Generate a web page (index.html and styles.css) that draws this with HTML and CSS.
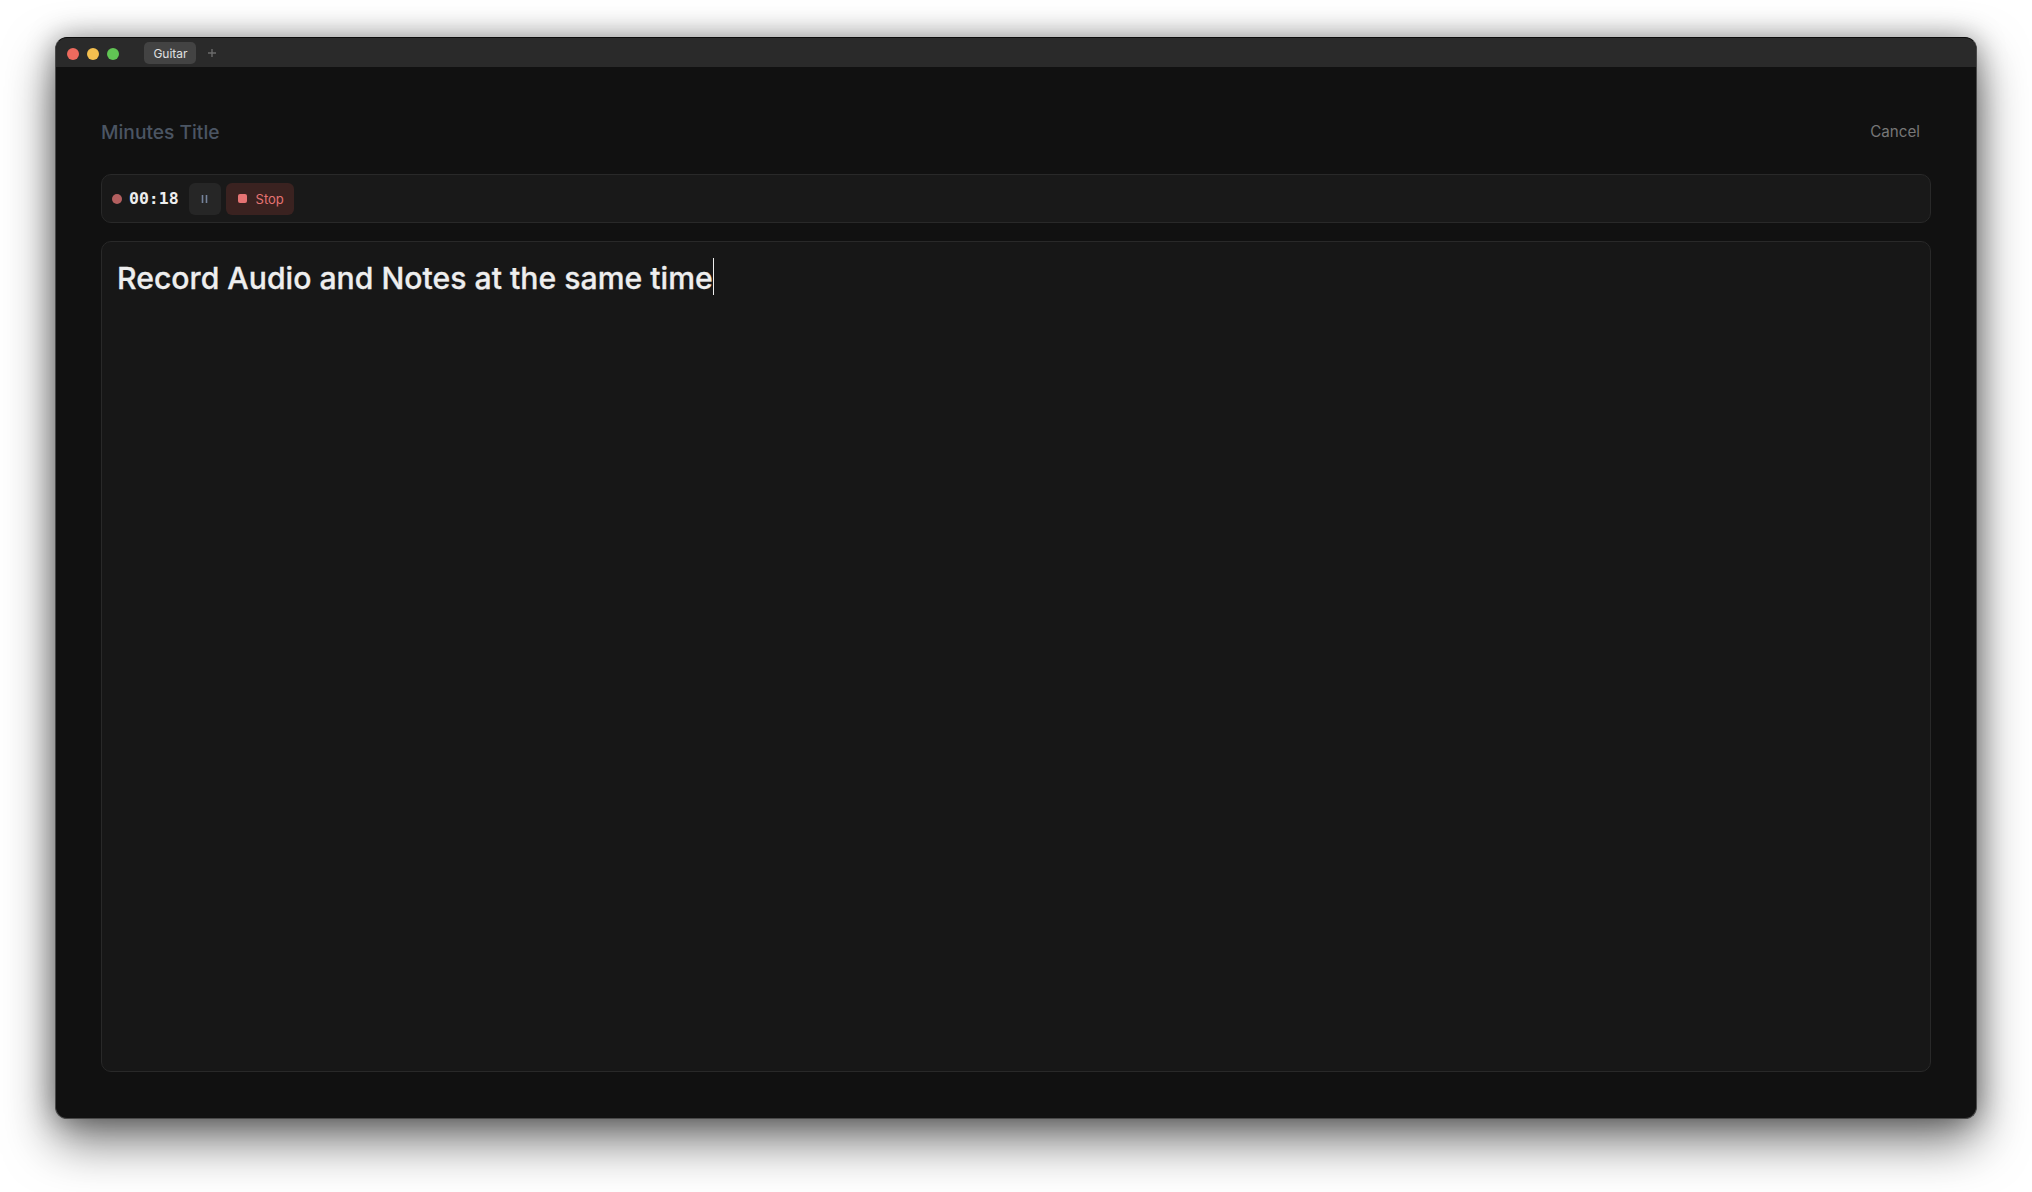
FILE: index.html
```html
<!DOCTYPE html>
<html lang="en">
<head>
    <meta charset="UTF-8">
    <title>Minutes</title>
    <link rel="stylesheet" href="styles.css">
</head>
<body>
<div class="window">
    <div class="titlebar">
        <div class="traffic">
            <span class="light light-red"></span>
            <span class="light light-yellow"></span>
            <span class="light light-green"></span>
        </div>
        <div class="tab">Guitar</div>
        <svg class="tab-add" width="10" height="10" viewBox="0 0 10 10"><path d="M5 1v8M1 5h8" stroke="#6b6b6b" stroke-width="1.4"/></svg>
    </div>
    <div class="content">
        <div class="header">
            <div class="title">Minutes Title</div>
            <div class="cancel">Cancel</div>
        </div>
        <div class="recorder">
            <span class="rec-dot"></span>
            <span class="timer">00:18</span>
            <div class="btn btn-pause">
                <svg width="8" height="10" viewBox="0 0 8 10"><path d="M1.5 1v8M5.5 1v8" stroke="#75839b" stroke-width="1.6"/></svg>
            </div>
            <div class="btn btn-stop">
                <span class="stop-icon"></span>
                <span>Stop</span>
            </div>
        </div>
        <div class="editor">
            <h1 class="editor-text">Record Audio and Notes at the same time</h1><span class="caret"></span>
        </div>
    </div>
</div>
</body>
</html>
```

FILE: styles.css
```css
html, body {
    height: 100%;
}

body {
    margin: 0;
    padding: 37px 55px 0;
    box-sizing: border-box;
    background: #fff;
    font-family: Inter, "Liberation Sans", sans-serif;
    overflow: hidden;
}

.window {
    height: 1082px;
    box-sizing: border-box;
    display: flex;
    flex-direction: column;
    background: #111;
    border: 1px solid #4a4a4a;
    border-top-color: #0c0c0c;
    border-radius: 12px;
    box-shadow: 0 22px 50px rgba(0, 0, 0, 0.55), 0 0 28px rgba(0, 0, 0, 0.35);
    overflow: hidden;
}

.titlebar {
    height: 29px;
    flex-shrink: 0;
    display: flex;
    align-items: center;
    background: #2a2a2a;
    padding-left: 11px;
}

.traffic {
    display: flex;
    gap: 8px;
    padding-top: 3px;
}

.light {
    width: 12px;
    height: 12px;
    border-radius: 50%;
}

.light-red { background: #ed6a5e; }
.light-yellow { background: #f4bf4f; }
.light-green { background: #61c554; }

.tab {
    margin-left: 25px;
    height: 22px;
    width: 52px;
    margin-top: 1px;
    padding-left: 1px;
    box-sizing: border-box;
    display: flex;
    align-items: center;
    justify-content: center;
    background: #434343;
    border-radius: 5px;
    color: #e0e0e0;
    font-size: 12px;
}

.tab-add {
    margin-left: 11px;
    margin-top: 1px;
}

.content {
    flex: 1;
    display: flex;
    flex-direction: column;
    padding: 46px 45px;
    min-height: 0;
}

.header {
    display: flex;
    justify-content: space-between;
    align-items: center;
    height: 38px;
    margin-bottom: 23px;
}

.title {
    font-size: 19.2px;
    font-weight: 500;
    color: #4b5563;
}

.cancel {
    font-size: 15.2px;
    color: #777;
    margin-right: 11px;
    padding-bottom: 1px;
}

.recorder {
    height: 49px;
    box-sizing: border-box;
    flex-shrink: 0;
    display: flex;
    align-items: center;
    padding-left: 10px;
    background: #191919;
    border: 1px solid #292929;
    border-radius: 10px;
    margin-bottom: 18px;
}

.rec-dot {
    width: 10px;
    height: 10px;
    border-radius: 50%;
    background: #b35f5f;
}

.timer {
    margin-left: 7px;
    font-family: "DejaVu Sans Mono", "Liberation Mono", monospace;
    font-size: 16.5px;
    font-weight: 700;
    color: #eee;
}

.btn {
    height: 32px;
    display: flex;
    align-items: center;
    justify-content: center;
    border-radius: 6px;
}

.btn-pause {
    width: 32px;
    margin-left: 10px;
    background: #262626;
}

.btn-stop {
    width: 68px;
    box-sizing: border-box;
    padding-left: 2px;
    margin-left: 5px;
    gap: 9px;
    background: #3a2220;
    color: #e57373;
    font-size: 13px;
}

.stop-icon {
    width: 9px;
    height: 9px;
    border-radius: 2px;
    background: #e57373;
}

.editor {
    flex: 1;
    display: flex;
    align-items: flex-start;
    padding: 17px 15px;
    background: #171717;
    border: 1px solid #292929;
    border-radius: 10px;
}

.editor-text {
    margin: 0;
    font-size: 30.2px;
    line-height: 38px;
    font-weight: 500;
    -webkit-text-stroke: 0.3px #eee;
    color: #eee;
}

.caret {
    width: 1px;
    height: 37px;
    margin-top: -1px;
    background: #eee;
}
```
